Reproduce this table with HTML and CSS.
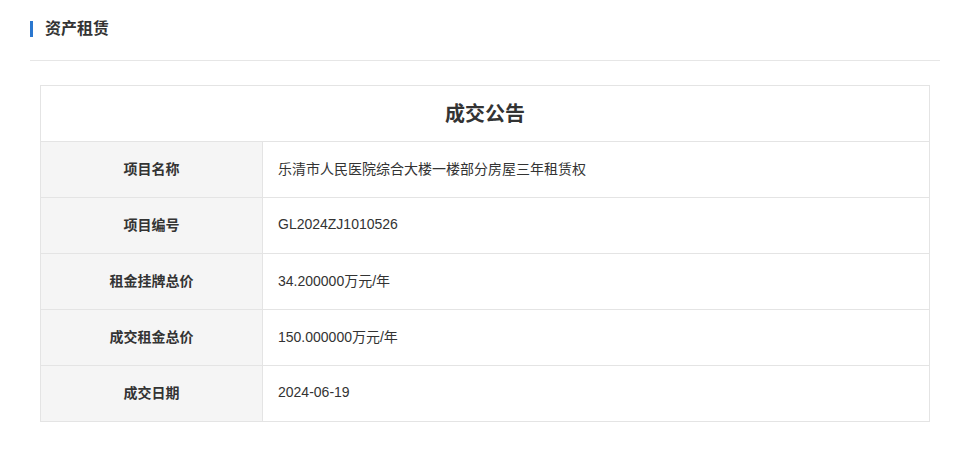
FILE: index.html
```html
<!DOCTYPE html>
<html lang="zh-CN">
<head>
<meta charset="utf-8">
<title>资产租赁</title>
<link rel="stylesheet" href="styles.css">
</head>
<body>
<div class="page">
  <div class="section-head">
    <span class="bar"></span>
    <h2 class="section-title">资产租赁</h2>
  </div>
  <div class="content">
    <div class="notice">
      <div class="notice-title">成交公告</div>
      <div class="row">
        <div class="label">项目名称</div>
        <div class="value">乐清市人民医院综合大楼一楼部分房屋三年租赁权</div>
      </div>
      <div class="row">
        <div class="label">项目编号</div>
        <div class="value">GL2024ZJ1010526</div>
      </div>
      <div class="row">
        <div class="label">租金挂牌总价</div>
        <div class="value">34.200000万元/年</div>
      </div>
      <div class="row">
        <div class="label">成交租金总价</div>
        <div class="value">150.000000万元/年</div>
      </div>
      <div class="row last">
        <div class="label">成交日期</div>
        <div class="value">2024-06-19</div>
      </div>
    </div>
  </div>
</div>
</body>
</html>
```
FILE: styles.css
```css
html, body {
  margin: 0;
  padding: 0;
  background: #fff;
}
body {
  font-family: "Liberation Sans", "Noto Sans CJK SC", sans-serif;
  color: #333;
}
.page {
  padding: 0 31px 0 30px;
}
.section-head {
  display: flex;
  align-items: center;
  height: 61px;
  border-bottom: 1px solid #e6e6e6;
  box-sizing: border-box;
  padding-bottom: 3px;
}
.bar {
  width: 3px;
  height: 16px;
  background: #2a77cf;
  margin-right: 12px;
}
.section-title {
  margin: 0;
  font-size: 16px;
  font-weight: bold;
  color: #333;
  line-height: 20px;
}
.content {
  padding: 24px 10px 0 10px;
}
.notice {
  border: 1px solid #e4e4e4;
}
.notice-title {
  height: 55px;
  border-bottom: 1px solid #e4e4e4;
  display: flex;
  align-items: center;
  justify-content: center;
  font-size: 20px;
  font-weight: bold;
  color: #333;
  padding-bottom: 3px;
  box-sizing: content-box;
  height: 52px;
}
.row {
  display: grid;
  grid-template-columns: 222px 1fr;
  height: 56px;
  border-bottom: 1px solid #e4e4e4;
  box-sizing: border-box;
}
.row.last {
  border-bottom: none;
  height: 55px;
}
.label {
  background: #f5f5f5;
  border-right: 1px solid #e4e4e4;
  display: flex;
  align-items: center;
  justify-content: center;
  font-size: 14px;
  font-weight: bold;
  color: #333;
  padding-bottom: 3px;
}
.value {
  display: flex;
  align-items: center;
  padding-left: 15px;
  padding-bottom: 3px;
  font-size: 14px;
  color: #333;
}
```
